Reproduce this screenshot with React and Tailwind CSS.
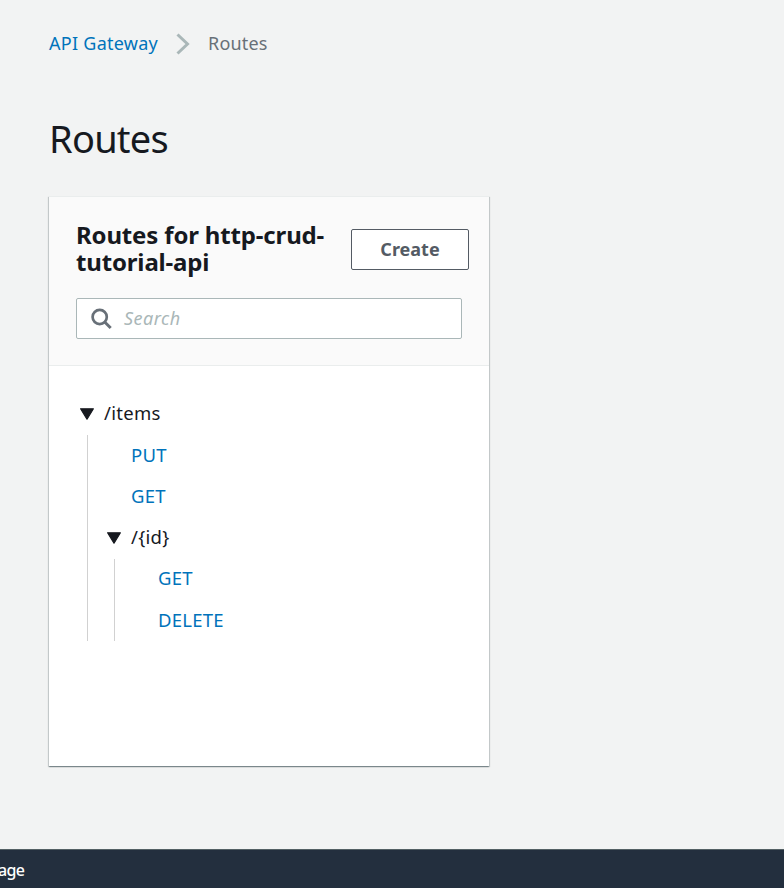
import React from "react";

function Caret() {
  return (
    <svg width="14" height="12" viewBox="0 0 14 12" className="mb-px shrink-0">
      <path d="M.6.8h12.8L7 11.2z" fill="#16191f" stroke="#16191f" strokeWidth="1.2" strokeLinejoin="round" />
    </svg>
  );
}

function Method({ children }) {
  return (
    <div className="flex h-[41.2px] items-center pb-[2px] pl-[43px]">
      <a className="text-[18.5px] tracking-[0.25px] text-[#0073bb]">{children}</a>
    </div>
  );
}

function Branch({ label, children }) {
  return (
    <div>
      <div className="flex h-[41.2px] items-center gap-[10px] text-[#16191f]">
        <Caret />
        <span className="pb-[3px] text-[18.5px] tracking-[0.3px]">{label}</span>
      </div>
      <div className="ml-[7px] border-l border-[#d1d1d1]">{children}</div>
    </div>
  );
}

export default function App() {
  return (
    <div className="flex h-[888px] w-[784px] flex-col overflow-hidden bg-[#f2f3f3] font-['Noto_Sans',sans-serif] text-[18px] leading-[28px] text-[#16191f]">
      <main className="flex-1 pl-[49px]">
        <nav className="flex items-center pt-[29px]">
          <a className="w-[109px] whitespace-nowrap tracking-[0.27px] text-[#0073bb]">API Gateway</a>
          <svg width="14" height="22" viewBox="0 0 14 22" className="mx-[18px] mt-[2px]">
            <path d="M1.5 1.5L11.5 11L1.5 20.5" fill="none" stroke="#aab7b8" strokeWidth="3" />
          </svg>
          <span className="tracking-[0.2px] text-[#687078]">Routes</span>
        </nav>
        <h1 className="mt-[56px] text-[38px] leading-[50px] tracking-[-0.75px]">Routes</h1>
        <section className="mt-[33px] h-[570px] w-[440px] bg-white shadow-[0_1px_1px_0_rgba(0,28,36,0.3),1px_1px_1px_0_rgba(0,28,36,0.15),-1px_1px_1px_0_rgba(0,28,36,0.15)]">
          <header className="h-[170px] border-y border-[#eaeded] bg-[#fafafa] pl-[27px] pr-5 pt-[24px]">
            <div className="flex items-start justify-between">
              <h2 className="w-[262px] text-[24px] font-bold leading-[27px] tracking-[-0.16px]">
                Routes for http-crud-tutorial-api
              </h2>
              <button className="mt-[8px] h-[41px] w-[118px] shrink-0 rounded-[2px] border border-[#545b64] bg-white pb-[2px] font-bold text-[#545b64]">
                Create
              </button>
            </div>
            <div className="mt-[23px] flex h-[41px] w-[386px] items-center rounded-[2px] border border-[#aab7b8] bg-white pl-[14px]">
              <svg width="22" height="22" viewBox="0 0 22 22" fill="none" stroke="#687078">
                <circle cx="8.7" cy="9" r="7.1" strokeWidth="2.7" />
                <path d="M13.7 14l6 6" strokeWidth="3" />
              </svg>
              <span className="ml-[11px] pb-px italic tracking-[0.5px] text-[#aab7b8]">Search</span>
            </div>
          </header>
          <div className="pl-[31px] pt-[28px]">
            <Branch label="/items">
              <Method>PUT</Method>
              <Method>GET</Method>
              <div className="pl-[19px]">
                <Branch label="/{id}">
                  <Method>GET</Method>
                  <Method>DELETE</Method>
                </Branch>
              </div>
            </Branch>
          </div>
        </section>
      </main>
      <footer className="flex h-[39px] shrink-0 items-center border-t border-[#546064] bg-[#232f3e] pt-[2px] text-[16px] font-medium text-white">
        <span className="-ml-[2px] tracking-[-0.7px]">age</span>
      </footer>
    </div>
  );
}
